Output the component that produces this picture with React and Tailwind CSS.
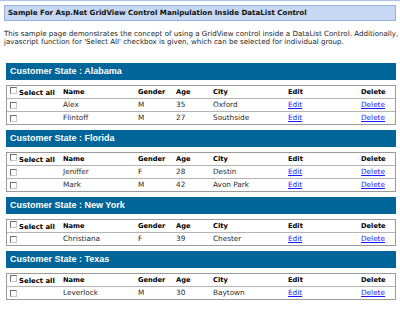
const groups = [
  {
    state: "Alabama",
    rows: [
      { name: "Alex", gender: "M", age: 35, city: "Oxford" },
      { name: "Flintoff", gender: "M", age: 27, city: "Southside" },
    ],
  },
  {
    state: "Florida",
    rows: [
      { name: "Jeniffer", gender: "F", age: 28, city: "Destin" },
      { name: "Mark", gender: "M", age: 42, city: "Avon Park" },
    ],
  },
  {
    state: "New York",
    rows: [{ name: "Christiana", gender: "F", age: 39, city: "Chester" }],
  },
  {
    state: "Texas",
    rows: [{ name: "Leverlock", gender: "M", age: 30, city: "Baytown" }],
  },
];

// column template shared by header and data rows
const cols = "grid grid-cols-[56px_75px_38px_37px_75px_73px_1fr] items-center h-[12px]";

function Box() {
  return (
    <span className="inline-block w-[7px] h-[7px] bg-white border border-t-[#6f6f6f] border-l-[#6f6f6f] border-r-[#c8c8c8] border-b-[#c8c8c8]" />
  );
}

function Group({ state, rows }) {
  return (
    <div className="mb-[5px]">
      <div className="h-[17px] bg-[#006699] text-white font-['Liberation_Sans',Arial,sans-serif] font-bold text-[9px] leading-[17px] pl-[4px]">
        Customer State : {state}
      </div>
      <div className="mt-[5px] border border-[#9a9a9a] font-['DejaVu_Sans',Verdana,sans-serif] text-[#2a2a2a] text-[7.3px] leading-[12px]">
        <div className={cols + " text-black font-bold text-[6.7px]"}>
          <div className="flex items-end gap-[2px] pl-[3px] h-[12px]">
            <span className="flex mb-[4px]"><Box /></span>
            <span className="text-[6.9px] leading-[10px]">Select all</span>
          </div>
          <div>Name</div>
          <div>Gender</div>
          <div>Age</div>
          <div>City</div>
          <div>Edit</div>
          <div>Delete</div>
        </div>
        {rows.map((r) => (
          <div key={r.name} className={cols + " border-t border-[#b4b4b4] box-content"}>
            <div className="flex pl-[3px]"><Box /></div>
            <div>{r.name}</div>
            <div>{r.gender}</div>
            <div>{r.age}</div>
            <div>{r.city}</div>
            <div><a href="#" className="text-[#1a1aff] underline">Edit</a></div>
            <div><a href="#" className="text-[#1a1aff] underline">Delete</a></div>
          </div>
        ))}
      </div>
    </div>
  );
}

export default function App() {
  return (
    <div className="w-[400px] h-[315px] bg-white border-t border-[#a9c1e4] overflow-hidden">
      <div className="mx-[4px] mt-[4px] h-[16px] bg-[#c6d8f3] border border-[#97b2db] pl-[3px] font-['DejaVu_Sans',Verdana,sans-serif] font-bold text-[7.1px] leading-[14px] text-[#111]">
        Sample For Asp.Net GridView Control Manipulation Inside DataList Control
      </div>
      <p className="mx-[4px] mt-[9px] font-['DejaVu_Sans',Verdana,sans-serif] text-[7.1px] leading-[7.5px] text-[#222] whitespace-nowrap">
        This sample page demonstrates the concept of using a GridView control inside a DataList Control. Additionally,
        <br />
        javascript function for 'Select All' checkbox is given, which can be selected for individual group.
      </p>
      <div className="ml-[6px] mr-[4px] mt-[18px]">
        {groups.map((g) => (
          <Group key={g.state} state={g.state} rows={g.rows} />
        ))}
      </div>
    </div>
  );
}
